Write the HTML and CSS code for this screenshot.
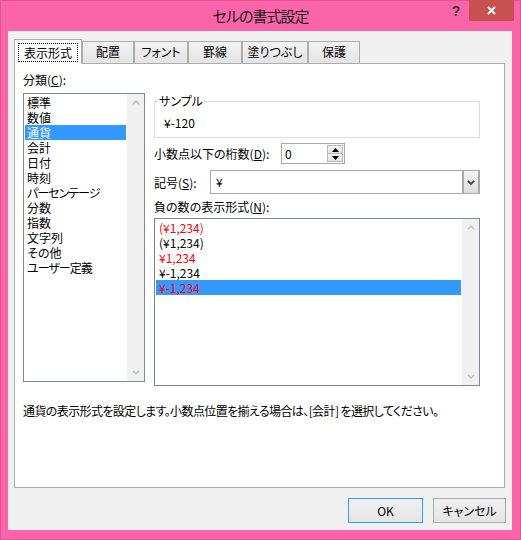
FILE: index.html
```html
<!DOCTYPE html>
<html lang="ja">
<head>
<meta charset="utf-8">
<title>セルの書式設定</title>
<link rel="stylesheet" href="styles.css">
</head>
<body>
<div class="window">
  <div class="titlebar">
    <div class="title">セルの書式設定</div>
    <div class="controls">
      <span class="help">?</span>
      <span class="close"><svg width="9" height="9" viewBox="0 0 9 9"><path d="M1 1L8 8M8 1L1 8" stroke="#fff" stroke-width="2"/></svg></span>
    </div>
  </div>
  <div class="client">
    <div class="tabs">
      <div class="tab active"><span class="focus">表示形式</span></div>
      <div class="tab t52">配置</div>
      <div class="tab t54">フォント</div>
      <div class="tab t54">罫線</div>
      <div class="tab t66">塗りつぶし</div>
      <div class="tab t52">保護</div>
    </div>
    <div class="panel">
      <div class="panel-body">
        <div class="left">
          <div class="label">分類(<u>C</u>):</div>
          <div class="listbox cat">
            <ul class="items">
              <li>標準</li>
              <li>数値</li>
              <li class="sel">通貨</li>
              <li>会計</li>
              <li>日付</li>
              <li>時刻</li>
              <li class="narrow">パーセンテージ</li>
              <li>分数</li>
              <li>指数</li>
              <li>文字列</li>
              <li>その他</li>
              <li class="narrow">ユーザー定義</li>
            </ul>
            <div class="vscroll">
              <span class="arrow"><svg width="8" height="5" viewBox="0 0 8 5"><polyline points="0.8,4.3 4,1.2 7.2,4.3" fill="none" stroke="#c4c4c4" stroke-width="1.6"/></svg></span>
              <span class="arrow"><svg width="8" height="5" viewBox="0 0 8 5"><polyline points="0.8,0.7 4,3.8 7.2,0.7" fill="none" stroke="#c4c4c4" stroke-width="1.6"/></svg></span>
            </div>
          </div>
        </div>
        <div class="right">
          <fieldset class="sample">
            <legend>サンプル</legend>
            <div class="sample-val">¥-120</div>
          </fieldset>
          <div class="row spin-row">
            <span class="row-label w127">小数点以下の桁数(<u>D</u>):</span>
            <div class="spin">
              <span class="spin-val">0</span>
              <span class="spin-btns">
                <span class="spin-btn"><svg width="7" height="4" viewBox="0 0 7 4"><path d="M3.5 0L7 4H0Z" fill="#000"/></svg></span>
                <span class="spin-btn"><svg width="7" height="4" viewBox="0 0 7 4"><path d="M0 0H7L3.5 4Z" fill="#000"/></svg></span>
              </span>
            </div>
          </div>
          <div class="row combo-row">
            <span class="row-label w56">記号(<u>S</u>):</span>
            <div class="combo">
              <span class="combo-val">¥</span>
              <span class="combo-btn"><svg width="8" height="5" viewBox="0 0 8 5"><polyline points="0.8,0.8 4,3.9 7.2,0.8" fill="none" stroke="#404040" stroke-width="1.8"/></svg></span>
            </div>
          </div>
          <div class="label neg-label">負の数の表示形式(<u>N</u>):</div>
          <div class="listbox neg">
            <ul class="items">
              <li class="red">(¥1,234)</li>
              <li>(¥1,234)</li>
              <li class="red">¥1,234</li>
              <li>¥-1,234</li>
              <li class="sel-red">¥-1,234</li>
            </ul>
            <div class="vscroll">
              <span class="arrow"><svg width="8" height="5" viewBox="0 0 8 5"><polyline points="0.8,4.3 4,1.2 7.2,4.3" fill="none" stroke="#c4c4c4" stroke-width="1.6"/></svg></span>
              <span class="arrow"><svg width="8" height="5" viewBox="0 0 8 5"><polyline points="0.8,0.7 4,3.8 7.2,0.7" fill="none" stroke="#c4c4c4" stroke-width="1.6"/></svg></span>
            </div>
          </div>
        </div>
      </div>
      <p class="desc">通貨の表示形式を設定します。小数点位置を揃える場合は、[会計] を選択してください。</p>
    </div>
    <div class="buttons">
      <button class="btn default">OK</button>
      <button class="btn cancel">キャンセル</button>
    </div>
  </div>
</div>
</body>
</html>
```

FILE: styles.css
```css
* { box-sizing: border-box; }
html, body { margin: 0; padding: 0; }
body {
  width: 521px;
  height: 540px;
  overflow: hidden;
  background: #fff;
  font-family: "Noto Sans CJK JP", "Noto Sans", sans-serif;
  font-size: 12px;
  color: #000;
  font-feature-settings: "palt" 1;
}
.window {
  width: 521px;
  height: 540px;
  background: #fc64aa;
  box-shadow: inset 0 0 0 1px #e2559b;
  display: flex;
  flex-direction: column;
}
.titlebar {
  flex: none;
  height: 31px;
  display: grid;
  grid-template-columns: 1fr auto 1fr;
}
.title {
  grid-column: 2;
  font-size: 15px;
  line-height: 20px;
  padding-top: 6px;
  color: #202020;
  letter-spacing: -1px;
}
.controls {
  grid-column: 3;
  justify-self: end;
  display: flex;
  align-items: flex-start;
  margin-right: 7px;
}
.help {
  width: 26px;
  height: 21px;
  display: flex;
  align-items: center;
  justify-content: center;
  font-family: "Liberation Sans", sans-serif;
  font-weight: bold;
  font-size: 14px;
  color: #333;
}
.close {
  width: 45px;
  height: 21px;
  background: #c75050;
  display: flex;
  align-items: center;
  justify-content: center;
}
.client {
  flex: none;
  margin-left: 8px;
  width: 504px;
  height: 499px;
  background: #f0f0f0;
  padding: 8px 6px 0 6px;
  display: flex;
  flex-direction: column;
}
.tabs {
  display: flex;
  align-items: flex-end;
  height: 25px;
  margin-bottom: -1px;
  position: relative;
  z-index: 1;
}
.tab {
  height: 23px;
  border: 1px solid #acacac;
  background: linear-gradient(#f2f2f2, #e4e4e4);
  display: flex;
  justify-content: center;
  padding-top: 2px;
  line-height: 16px;
  white-space: nowrap;
}
.tab.active {
  width: 68px;
  height: 25px;
  background: #fff;
  border-bottom: none;
  padding-top: 3px;
}
.t52 { width: 52px; }
.t54 { width: 54px; }
.t66 { width: 66px; }
.focus {
  display: inline-block;
  height: 19px;
  line-height: 17px;
  padding: 0 5px;
  border: 1px dotted #000;
}
.panel {
  flex: none;
  width: 491px;
  height: 425px;
  border: 1px solid #acacac;
  background: #fff;
  padding: 8px 0 0 8px;
}
.panel-body {
  display: flex;
  gap: 9px;
  align-items: flex-start;
}
.left { width: 122px; flex: none; }
.label { line-height: 16px; white-space: nowrap; }
.listbox {
  border: 1px solid #828790;
  background: #fff;
  display: flex;
}
.cat { margin-top: 5px; height: 289px; }
.items {
  flex: 1;
  list-style: none;
  margin: 0;
  padding: 1px;
}
.items li {
  height: 15px;
  line-height: 15px;
  padding-left: 2px;
  white-space: nowrap;
}
.items li.narrow { letter-spacing: -1px; }
.neg .items li { padding-left: 3px; }
.items li.sel { background: #3399ff; color: #fff; }
.items li.red { color: #ff0000; }
.items li.sel-red { background: #3399ff; color: #ff0000; }
.vscroll {
  width: 17px;
  flex: none;
  background: #f0f0f0;
  display: flex;
  flex-direction: column;
  justify-content: space-between;
}
.arrow {
  height: 17px;
  display: flex;
  align-items: center;
  justify-content: center;
}
.right {
  width: 326px;
  flex: none;
  padding-top: 21px;
  display: flex;
  flex-direction: column;
}
.sample {
  margin: 0;
  min-inline-size: 0;
  border: 1px solid #dcdcdc;
  padding: 6px 8px 6px 3px;
}
.sample legend {
  padding: 0 1px;
  line-height: 16px;
}
.sample-val { padding-left: 6px; line-height: 16px; }
.row { display: flex; align-items: center; }
.row-label { white-space: nowrap; flex: none; }
.w127 { width: 127px; }
.w56 { width: 56px; }
.spin-row { margin-top: 5px; height: 21px; }
.spin {
  width: 64px;
  height: 21px;
  border: 1px solid #a9a9a9;
  background: #fff;
  display: flex;
}
.spin-val { flex: 1; padding-left: 3px; line-height: 19px; }
.spin-btns {
  width: 16px;
  margin: 1px 1px 1px 0;
  display: flex;
  flex-direction: column;
}
.spin-btn {
  flex: 1;
  border: 1px solid #b9b9b9;
  background: linear-gradient(#f4f4f4, #e2e2e2);
  display: flex;
  align-items: center;
  justify-content: center;
}
.spin-btn + .spin-btn { border-top: none; }
.combo-row { margin-top: 6px; height: 24px; }
.combo {
  width: 270px;
  height: 24px;
  border: 1px solid #a9a9a9;
  border-right-width: 2px;
  background: #fff;
  display: flex;
}
.combo-val { flex: 1; padding-left: 5px; line-height: 22px; }
.combo-btn {
  width: 16px;
  border-left: 2px solid #a9a9a9;
  background: linear-gradient(#f3f3f3, #dcdcdc);
  display: flex;
  align-items: center;
  justify-content: center;
}
.neg-label { margin-top: 5px; }
.neg { margin-top: 3px; height: 168px; }
.desc {
  margin: 17px 0 0;
  line-height: 16px;
  white-space: nowrap;
  letter-spacing: -0.6px;
}
.buttons {
  display: flex;
  justify-content: flex-end;
  gap: 10px;
  margin-top: 10px;
}
.btn {
  height: 25px;
  padding: 0;
  border: 1px solid #acacac;
  background: linear-gradient(#f0f0f0, #e5e5e5);
  font: inherit;
  font-size: 12px;
  color: #000;
}
.btn.default { width: 75px; border-color: #3399ff; }
.btn.cancel { width: 73px; }
```
